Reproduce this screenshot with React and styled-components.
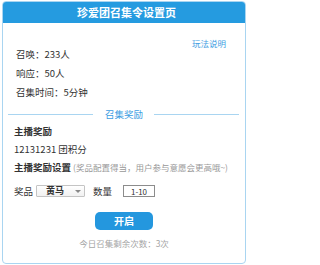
import styled, { createGlobalStyle } from 'styled-components';

const GlobalStyle = createGlobalStyle`
  html, body {
    margin: 0;
    padding: 0;
    background: #fff;
  }
  body {
    font-family: "Noto Sans CJK SC", "Noto Sans", sans-serif;
    color: #333;
  }
`;

const Card = styled.div`
  box-sizing: border-box;
  width: 244px;
  height: 263px;
  margin: 1px 0 0 2px;
  border: 1px solid #a9d5f1;
  border-radius: 4px;
  overflow: hidden;
  background: #fff;
`;

const Header = styled.div`
  height: 21px;
  padding-left: 5px;
  background: #259be0;
  color: #fff;
  font-size: 11px;
  font-weight: 700;
  line-height: 21px;
  text-align: center;
`;

const Body = styled.div`
  padding: 15px 0 0;
  display: flex;
  flex-direction: column;
`;

const HelpLink = styled.a`
  align-self: flex-end;
  margin-right: 19px;
  font-size: 8.5px;
  line-height: 10px;
  color: #3d9de2;
  text-decoration: none;
`;

const InfoList = styled.div`
  display: flex;
  flex-direction: column;
  gap: 7px;
  padding-left: 13px;
`;

const Line = styled.div`
  font-size: 9.5px;
  line-height: 12px;
  font-weight: ${(p) => (p.$bold ? 700 : 400)};
  margin-top: ${(p) => p.$mt || 0}px;
  white-space: nowrap;
`;

const Divider = styled.div`
  display: flex;
  align-items: center;
  margin: 10px 6px 0 5px;
  height: 12px;
  &::before,
  &::after {
    content: '';
    flex: 1;
    height: 1px;
    background: #a9d5f1;
  }
`;

const DividerLabel = styled.span`
  padding: 0 11px 0 12px;
  font-size: 9.5px;
  line-height: 12px;
  color: #3d9de2;
`;

const Section = styled.div`
  padding-left: 11px;
  display: flex;
  flex-direction: column;
`;

const Hint = styled.span`
  font-size: 8.5px;
  font-weight: 400;
  color: #999;
  margin-left: 2px;
`;

const FormRow = styled.div`
  display: flex;
  align-items: center;
  margin-top: 12px;
  height: 12px;
  font-size: 9.5px;
`;

const Label = styled.span`
  line-height: 12px;
  margin-right: ${(p) => p.$gap}px;
`;

const SelectBox = styled.div`
  position: relative;
  box-sizing: border-box;
  width: 49px;
  height: 12px;
  margin-right: 8px;
  border: 1px solid #c4c4c4;
  border-radius: 1px;
  background: linear-gradient(#fff, #f1f1f1);
  font-size: 9px;
  font-weight: 700;
  line-height: 10px;
  padding-left: 9px;
`;

const Caret = styled.span`
  position: absolute;
  right: 3px;
  top: 4px;
  width: 0;
  height: 0;
  border-left: 3px solid transparent;
  border-right: 3px solid transparent;
  border-top: 3px solid #888;
`;

const NumInput = styled.input`
  box-sizing: border-box;
  width: 32px;
  height: 12px;
  padding: 0;
  border: 1px solid #8c8c8c;
  font-family: inherit;
  font-size: 8px;
  line-height: 10px;
  text-align: center;
  color: #333;
  outline: none;
`;

const StartButton = styled.button`
  align-self: center;
  width: 58px;
  height: 18px;
  margin-top: 15px;
  padding: 0;
  border: none;
  border-radius: 5px;
  background: #2497de;
  color: #fff;
  font-family: inherit;
  font-size: 10px;
  font-weight: 700;
  line-height: 18px;
  cursor: pointer;
`;

const Remain = styled.div`
  align-self: center;
  margin-top: 7px;
  font-size: 8.5px;
  line-height: 12px;
  color: #a5a5a5;
`;

export default function App() {
  return (
    <>
      <GlobalStyle />
      <Card>
        <Header>珍爱团召集令设置页</Header>
        <Body>
          <HelpLink href="#">玩法说明</HelpLink>
          <InfoList>
            <Line>召唤：233人</Line>
            <Line>响应：50人</Line>
            <Line>召集时间：5分钟</Line>
          </InfoList>
          <Divider>
            <DividerLabel>召集奖励</DividerLabel>
          </Divider>
          <Section>
            <Line $bold $mt={5}>主播奖励</Line>
            <Line $mt={6}>12131231 团积分</Line>
            <Line $bold $mt={6}>
              主播奖励设置<Hint>(奖品配置得当，用户参与意愿会更高哦~)</Hint>
            </Line>
            <FormRow>
              <Label $gap={3}>奖品</Label>
              <SelectBox>
                黄马
                <Caret />
              </SelectBox>
              <Label $gap={11}>数量</Label>
              <NumInput readOnly value="1-10" />
            </FormRow>
          </Section>
          <StartButton>开启</StartButton>
          <Remain>今日召集剩余次数：3次</Remain>
        </Body>
      </Card>
    </>
  );
}
